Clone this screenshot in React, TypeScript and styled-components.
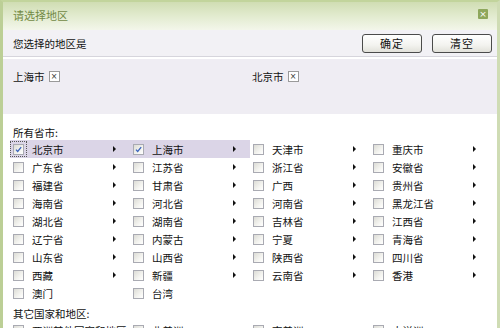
import React from 'react';
import styled, { createGlobalStyle } from 'styled-components';

const GlobalStyle = createGlobalStyle`
  html, body {
    margin: 0;
    padding: 0;
    background: #fff;
  }
  body {
    font-family: 'Noto Sans CJK SC', 'Liberation Sans', sans-serif;
  }
`;

type Area = {
  name: string;
  checked?: boolean;
  more?: boolean;
};

const PROVINCES: Area[] = [
  { name: '北京市', checked: true, more: true },
  { name: '上海市', checked: true, more: true },
  { name: '天津市', more: true },
  { name: '重庆市', more: true },
  { name: '广东省', more: true },
  { name: '江苏省', more: true },
  { name: '浙江省', more: true },
  { name: '安徽省', more: true },
  { name: '福建省', more: true },
  { name: '甘肃省', more: true },
  { name: '广西', more: true },
  { name: '贵州省', more: true },
  { name: '海南省', more: true },
  { name: '河北省', more: true },
  { name: '河南省', more: true },
  { name: '黑龙江省', more: true },
  { name: '湖北省', more: true },
  { name: '湖南省', more: true },
  { name: '吉林省', more: true },
  { name: '江西省', more: true },
  { name: '辽宁省', more: true },
  { name: '内蒙古', more: true },
  { name: '宁夏', more: true },
  { name: '青海省', more: true },
  { name: '山东省', more: true },
  { name: '山西省', more: true },
  { name: '陕西省', more: true },
  { name: '四川省', more: true },
  { name: '西藏', more: true },
  { name: '新疆', more: true },
  { name: '云南省', more: true },
  { name: '香港', more: true },
  { name: '澳门' },
  { name: '台湾' },
];

const OTHERS: Area[] = [
  { name: '亚洲其他国家和地区' },
  { name: '北美洲' },
  { name: '南美洲' },
  { name: '大洋洲' },
];

const SELECTED = ['上海市', '北京市'];

const CheckMark = () => (
  <svg width="9" height="9" viewBox="0 0 9 9">
    <path d="M2 4.6 L3.7 6.4 L7.2 2.2" fill="none" stroke="#3a64bd" strokeWidth="1.3" />
  </svg>
);

const Cell = ({ area, focused }: { area: Area; focused?: boolean }) => (
  <Item $active={!!area.checked}>
    <BoxWrap $focused={!!focused}>
      <Box>{area.checked && <CheckMark />}</Box>
    </BoxWrap>
    <Label>{area.name}</Label>
    {area.more && <Arrow />}
  </Item>
);

const App = () => {
  return (
    <>
      <GlobalStyle />
      <Dialog>
        <TitleBar>
          <Title>请选择地区</Title>
          <CloseBtn>×</CloseBtn>
        </TitleBar>
        <Header>
          <HeaderText>您选择的地区是</HeaderText>
          <Buttons>
            <Button>确定</Button>
            <Button>清空</Button>
          </Buttons>
        </Header>
        <Chosen>
          {SELECTED.map(name => (
            <Chip key={name}>
              {name}
              <ChipClose>×</ChipClose>
            </Chip>
          ))}
        </Chosen>
        <Body>
          <Section>所有省市:</Section>
          <Grid>
            {PROVINCES.map((area, i) => (
              <Cell key={area.name} area={area} focused={i === 0} />
            ))}
          </Grid>
          <Section $top={5}>其它国家和地区:</Section>
          <Grid>
            {OTHERS.map(area => (
              <Cell key={area.name} area={area} />
            ))}
          </Grid>
        </Body>
      </Dialog>
    </>
  );
};

const Dialog = styled.div`
  width: 500px;
  height: 328px;
  box-sizing: border-box;
  border-left: 3px solid #bccf96;
  border-right: 3px solid #cfdcb4;
  border-top: 2px solid #c2d49c;
  overflow: hidden;
  display: flex;
  flex-direction: column;
  background: #fff;
  color: #111;
  font-size: 10.5px;
`;

const TitleBar = styled.div`
  height: 26px;
  flex: none;
  display: flex;
  align-items: center;
  justify-content: space-between;
  padding: 0 9px 2px 10px;
  background: linear-gradient(to bottom, #d0ddb3 0%, #e2ebcf 50%, #f3f6ea 100%);
`;

const Title = styled.span`
  font-size: 11px;
  color: #728a45;
`;

const CloseBtn = styled.span`
  width: 10px;
  height: 10px;
  margin-top: -3px;
  background: #8ea75c;
  color: #fff;
  font-size: 9px;
  line-height: 10px;
  text-align: center;
  font-family: 'DejaVu Sans', sans-serif;
  border-radius: 1px;
`;

const Header = styled.div`
  height: 26px;
  flex: none;
  display: flex;
  align-items: center;
  justify-content: space-between;
  padding: 0 5px 0 10px;
  background: #f2f1f5;
  border-bottom: 1px solid #d6d5dc;
`;

const HeaderText = styled.span`
  font-size: 10.5px;
`;

const Buttons = styled.div`
  display: flex;
  gap: 10px;
`;

const Button = styled.button`
  width: 60px;
  height: 19px;
  padding: 0;
  border: 1px solid #4b4b4b;
  border-radius: 3px;
  background: linear-gradient(to bottom, #ffffff 0%, #f3f3ef 60%, #e2e1da 100%);
  font-family: inherit;
  font-size: 11px;
  letter-spacing: 1px;
  color: #111;
`;

const Chosen = styled.div`
  height: 55px;
  flex: none;
  margin-top: 2px;
  display: grid;
  grid-template-columns: 239px 1fr;
  align-items: start;
  padding: 10px 10px 0;
  box-sizing: border-box;
  background: #efedf3;
`;

const Chip = styled.span`
  display: flex;
  align-items: center;
  gap: 4px;
`;

const ChipClose = styled.span`
  width: 9px;
  height: 9px;
  border: 1px solid #9a9a9a;
  background: #fff;
  font-size: 8px;
  line-height: 9px;
  text-align: center;
  color: #333;
  font-family: 'DejaVu Sans', sans-serif;
`;

const Body = styled.div`
  padding: 12px 0 0 7px;
`;

const Section = styled.div<{ $top?: number }>`
  margin-top: ${p => p.$top || 0}px;
  padding-left: 3px;
  height: 14px;
  line-height: 14px;
`;

const Grid = styled.div`
  display: grid;
  grid-template-columns: repeat(4, 120px);
  grid-auto-rows: 18px;
`;

const Item = styled.div<{ $active: boolean }>`
  display: flex;
  align-items: center;
  background: ${p => (p.$active ? '#dbd5e7' : 'transparent')};
`;

const BoxWrap = styled.span<{ $focused: boolean }>`
  width: 17px;
  height: 16px;
  box-sizing: border-box;
  display: flex;
  align-items: center;
  justify-content: center;
  border: 1px dotted ${p => (p.$focused ? '#555' : 'transparent')};
`;

const Box = styled.span`
  width: 11px;
  height: 11px;
  box-sizing: border-box;
  border: 1px solid #a9aab2;
  background: linear-gradient(135deg, #dcdcd6 0%, #f4f4f0 60%, #ffffff 100%);
  display: flex;
  align-items: center;
  justify-content: center;
`;

const Label = styled.span`
  margin-left: 5px;
  flex: 1;
  white-space: nowrap;
`;

const Arrow = styled.span`
  width: 0;
  height: 0;
  margin-right: 14px;
  border-top: 3px solid transparent;
  border-bottom: 3px solid transparent;
  border-left: 3px solid #111;
`;

export default App;
